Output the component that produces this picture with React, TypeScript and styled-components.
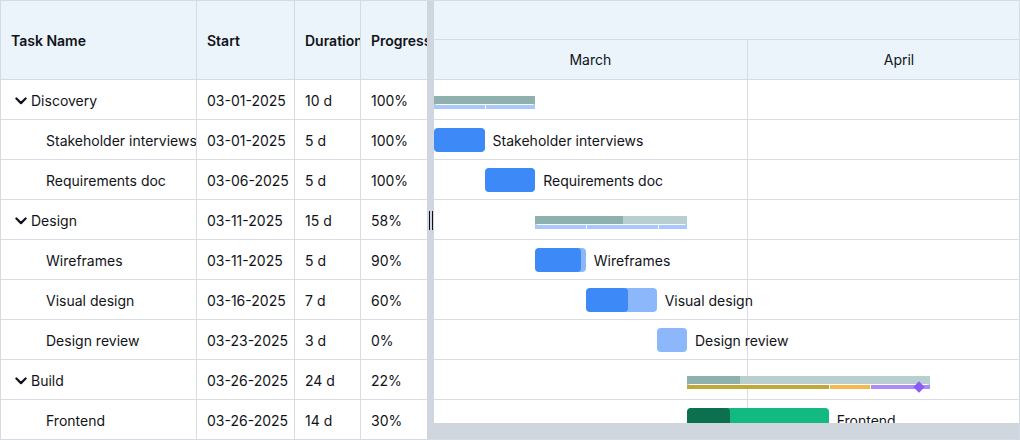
import styled, { createGlobalStyle } from 'styled-components'

const DAY = 10.12

type Segment = { days: number; color: string }

type Task = {
  name: string
  start: string
  offset: number
  days: number
  progress: number
  group?: boolean
  fill?: string
  done?: string
  strip?: Segment[]
  milestone?: number
}

const BLUE = '#3d89f8'
const BLUE_LIGHT = '#8cb8fb'
const STRIP = '#a8c8fc'

const tasks: Task[] = [
  {
    name: 'Discovery', start: '03-01-2025', offset: 0, days: 10, progress: 100, group: true,
    strip: [
      { days: 5, color: STRIP },
      { days: 5, color: STRIP },
    ],
  },
  { name: 'Stakeholder interviews', start: '03-01-2025', offset: 0, days: 5, progress: 100 },
  { name: 'Requirements doc', start: '03-06-2025', offset: 5, days: 5, progress: 100 },
  {
    name: 'Design', start: '03-11-2025', offset: 10, days: 15, progress: 58, group: true,
    strip: [
      { days: 5, color: STRIP },
      { days: 7, color: STRIP },
      { days: 3, color: STRIP },
    ],
  },
  { name: 'Wireframes', start: '03-11-2025', offset: 10, days: 5, progress: 90 },
  { name: 'Visual design', start: '03-16-2025', offset: 15, days: 7, progress: 60 },
  { name: 'Design review', start: '03-23-2025', offset: 22, days: 3, progress: 0 },
  {
    name: 'Build', start: '03-26-2025', offset: 25, days: 24, progress: 22, group: true,
    strip: [
      { days: 14, color: '#c2a837' },
      { days: 4, color: '#f8b74a' },
      { days: 6, color: '#ab8bf5' },
    ],
    milestone: 47.9,
  },
  {
    name: 'Frontend', start: '03-26-2025', offset: 25, days: 14, progress: 30,
    fill: '#12b981', done: '#0c7050',
  },
]

const months = [
  { name: 'March', days: 31 },
  { name: 'April', days: 30 },
]

const GlobalStyle = createGlobalStyle`
  html, body {
    margin: 0;
    padding: 0;
    background: #ffffff;
  }
  body {
    font-family: Inter, "Noto Sans", "Liberation Sans", sans-serif;
    color: #111318;
  }
  * {
    box-sizing: border-box;
  }
`

function Chevron() {
  return (
    <ChevronIcon width="12" height="8" viewBox="0 0 12 8">
      <polyline
        points="1.4,1.5 6,6.1 10.6,1.5"
        fill="none"
        stroke="#111318"
        strokeWidth="2.2"
        strokeLinecap="round"
        strokeLinejoin="round"
      />
    </ChevronIcon>
  )
}

function SummaryBar({ task }: { task: Task }) {
  const width = task.days * DAY
  return (
    <Summary style={{ left: task.offset * DAY, width }}>
      <SummaryDone style={{ width: `${task.progress}%` }} />
      <StripWell>
        <StripRow>
          {task.strip?.map((s, i) => (
            <StripPart
              key={i}
              style={{ width: s.days * DAY, background: s.color }}
            />
          ))}
        </StripRow>
      </StripWell>
      {task.milestone !== undefined && (
        <Diamond style={{ left: (task.milestone - task.offset) * DAY - 4 }} />
      )}
    </Summary>
  )
}

function TaskBar({ task }: { task: Task }) {
  const width = task.days * DAY
  return (
    <BarWrap style={{ left: task.offset * DAY }}>
      <Bar $fill={task.fill ?? BLUE_LIGHT} style={{ width }}>
        <BarDone $fill={task.done ?? BLUE} style={{ width: `${task.progress}%` }} />
      </Bar>
      <BarLabel>{task.name}</BarLabel>
    </BarWrap>
  )
}

function App() {
  return (
    <>
      <GlobalStyle />
      <Frame>
        <Grid>
          <HeaderRow>
            <HeadCell>Task Name</HeadCell>
            <HeadCell>Start</HeadCell>
            <HeadCell>Duration</HeadCell>
            <HeadCell $last>Progress</HeadCell>
          </HeaderRow>
          {tasks.map((t) => (
            <GridRow key={t.name}>
              <NameCell $group={!!t.group}>
                {t.group && <Chevron />}
                {t.name}
              </NameCell>
              <Cell>{t.start}</Cell>
              <Cell>{t.days} d</Cell>
              <Cell $last>{t.progress}%</Cell>
            </GridRow>
          ))}
        </Grid>

        <Splitter>
          <Handle />
        </Splitter>

        <Chart>
          <ChartScroll>
            <ChartHeaderTop />
            <MonthRow>
              {months.map((m) => (
                <MonthHead key={m.name} style={{ width: m.days * DAY }}>
                  {m.name}
                </MonthHead>
              ))}
            </MonthRow>
            {tasks.map((t) => (
              <ChartRow key={t.name}>
                {months.map((m) => (
                  <MonthCell key={m.name} style={{ width: m.days * DAY }} />
                ))}
                {t.group ? <SummaryBar task={t} /> : <TaskBar task={t} />}
              </ChartRow>
            ))}
          </ChartScroll>
          <ScrollTrack />
        </Chart>
      </Frame>
    </>
  )
}

const Frame = styled.div`
  display: flex;
  width: 1020px;
  height: 440px;
  border: 1px solid #d5dbe4;
  overflow: hidden;
  background: #ffffff;
`

const Grid = styled.div`
  width: 426px;
  flex-shrink: 0;
  display: flex;
  flex-direction: column;
`

const columns = '196px 98px 66px 66px'

const HeaderRow = styled.div`
  display: grid;
  grid-template-columns: ${columns};
  height: 79px;
  flex-shrink: 0;
  background: #ebf3fb;
  border-bottom: 1px solid #d5dbe4;
`

const HeadCell = styled.div<{ $last?: boolean }>`
  display: flex;
  align-items: center;
  padding: 0 0 0 10px;
  font-size: 14px;
  font-weight: 600;
  white-space: nowrap;
  overflow: hidden;
  border-right: ${(p) => (p.$last ? 'none' : '1px solid #d5dbe4')};
`

const GridRow = styled.div`
  display: grid;
  grid-template-columns: ${columns};
  height: 40px;
  border-bottom: 1px solid #d9dce5;
  flex-shrink: 0;
`

const Cell = styled.div<{ $last?: boolean }>`
  display: flex;
  align-items: center;
  padding: 2px 0 0 10px;
  font-size: 14px;
  white-space: nowrap;
  overflow: hidden;
  border-right: ${(p) => (p.$last ? 'none' : '1px solid #d9dce5')};
`

const NameCell = styled(Cell)<{ $group: boolean }>`
  padding-left: ${(p) => (p.$group ? '14px' : '45px')};
  gap: 4px;
`

const ChevronIcon = styled.svg`
  flex-shrink: 0;
`

const Splitter = styled.div`
  width: 7px;
  flex-shrink: 0;
  background: #d0d6de;
  display: flex;
  align-items: center;
  justify-content: center;
`

const Handle = styled.div`
  width: 4px;
  height: 19px;
  border-left: 1px solid #111318;
  border-right: 1px solid #111318;
  margin-top: 1px;
`

const Chart = styled.div`
  flex: 1;
  min-width: 0;
  display: flex;
  flex-direction: column;
  overflow: hidden;
`

const ChartScroll = styled.div`
  flex: 1;
  min-height: 0;
  overflow: hidden;
  display: flex;
  flex-direction: column;
  width: 620px;
`

const ChartHeaderTop = styled.div`
  height: 39px;
  flex-shrink: 0;
  background: #ebf3fb;
  border-bottom: 1px solid #d5dbe4;
`

const MonthRow = styled.div`
  display: flex;
  height: 40px;
  flex-shrink: 0;
  background: #ebf3fb;
  border-bottom: 1px solid #d5dbe4;
`

const MonthHead = styled.div`
  display: flex;
  align-items: center;
  justify-content: center;
  flex-shrink: 0;
  font-size: 14px;
  border-right: 1px solid #d5dbe4;
`

const ChartRow = styled.div`
  position: relative;
  display: flex;
  height: 40px;
  flex-shrink: 0;
  border-bottom: 1px solid #d9dce5;
`

const MonthCell = styled.div`
  flex-shrink: 0;
  height: 100%;
  border-right: 1px solid #d9dce5;
`

const Summary = styled.div`
  position: absolute;
  top: 16px;
  height: 13px;
  background: #b9cfcf;
`

const SummaryDone = styled.div`
  height: 8px;
  background: #8fb1ae;
`

const StripWell = styled.div`
  height: 5px;
  padding-top: 1px;
  background: #ffffff;
  border-radius: 4px 4px 0 0;
`

const StripRow = styled.div`
  display: flex;
  gap: 1px;
  height: 4px;
  overflow: hidden;
`

const StripPart = styled.div`
  flex-shrink: 0;
  height: 100%;
  &:last-child {
    flex: 1;
  }
`

const Diamond = styled.div`
  position: absolute;
  top: 7px;
  width: 8px;
  height: 8px;
  background: #8b5cf6;
  transform: rotate(45deg);
`

const BarWrap = styled.div`
  position: absolute;
  top: 8px;
  display: flex;
  align-items: center;
  gap: 8px;
`

const Bar = styled.div<{ $fill: string }>`
  height: 24px;
  border-radius: 4px;
  background: ${(p) => p.$fill};
  overflow: hidden;
  flex-shrink: 0;
`

const BarDone = styled.div<{ $fill: string }>`
  height: 100%;
  background: ${(p) => p.$fill};
  border-radius: 4px;
`

const BarLabel = styled.span`
  font-size: 14px;
  white-space: nowrap;
  color: #111318;
`

const ScrollTrack = styled.div`
  height: 16px;
  flex-shrink: 0;
  background: #d0d6de;
`

export default App
